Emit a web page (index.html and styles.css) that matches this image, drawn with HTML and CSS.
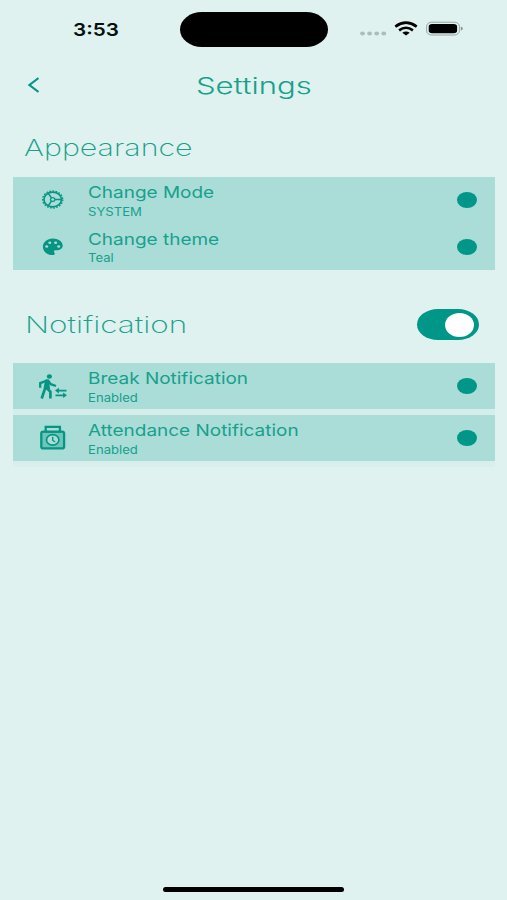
FILE: index.html
```html
<!DOCTYPE html>
<html lang="en">
<head>
<meta charset="utf-8">
<title>Settings</title>
<link rel="stylesheet" href="styles.css">
</head>
<body>
<div class="screen">
  <div class="status">
    <div class="time"><span class="wide w-time">3:53</span></div>
    <div class="island"></div>
    <svg class="status-icons" width="104" height="20" viewBox="0 0 104 20">
      <g fill="#abbdba"><ellipse cx="2.500" cy="13.500" rx="2.400" ry="2"/><ellipse cx="9.600" cy="13.500" rx="2.400" ry="2"/><ellipse cx="16.700" cy="13.500" rx="2.400" ry="2"/><ellipse cx="23.800" cy="13.500" rx="2.400" ry="2"/></g>
      <g fill="none" stroke="#000" stroke-width="2.600"><path d="M35.300 6.600Q46 -1.200 56.700 6.600"/><path d="M39.100 10.400Q46 5.100 52.900 10.400"/></g>
      <path d="M42.300 12.700Q46 10.300 49.700 12.700L46 15.600Z"/>
      <rect x="66.600" y="2.200" width="32.800" height="12.800" rx="5" ry="4.200" fill="none" stroke="#94a5a1"/>
      <rect x="68.700" y="3.900" width="28.400" height="9.400" rx="3.400" ry="2.800"/>
      <path d="M100.800 6.400Q102.900 7 102.900 8.600T100.800 10.800Z" fill="#8b9b98"/>
    </svg>
  </div>
  <header class="header">
    <svg class="back" width="14" height="18" viewBox="0 0 14 18"><path d="M13.500 2L4.400 9L13.500 16" fill="none" stroke="#009688" stroke-width="2.100"/></svg>
    <h1 class="title"><span class="wide w-settings">Settings</span></h1>
  </header>
  <section class="appearance">
    <h2 class="heading"><span class="wide w-appearance">Appearance</span></h2>
    <div class="group">
      <div class="row">
        <svg class="icon" width="30" height="28" viewBox="0 0 30 28">
          <g fill="none" stroke="#079583"><ellipse cx="14.700" cy="13.500" rx="8.800" ry="7.300" stroke-width="1.700"/><ellipse cx="14.700" cy="13.500" rx="10.100" ry="8.500" stroke-width="1.300" stroke-dasharray="1.700 1.400"/><ellipse cx="14.700" cy="13.500" rx="2.200" ry="1.900" stroke-width="1.200"/><path d="M16.900 13.500H23.200M13.500 11.900L10.200 7.300M13.500 15.100L10.200 19.700" stroke-width="1.500"/></g>
        </svg>
        <div class="label"><div class="name"><span class="wide w-name">Change Mode</span></div><div class="value"><span class="wide w-value">SYSTEM</span></div></div>
        <i class="dot"></i>
      </div>
      <div class="row">
        <svg class="icon" width="30" height="28" viewBox="0 0 30 28">
          <path fill="#079583" d="M14.700 5.500C9.200 5.500 4.900 9.200 4.900 13.800S9.200 22.100 14.700 22.100C16 22.100 16.800 21.400 16.800 20.500C16.800 19.600 15.900 19.200 15.900 18.500C15.900 17.800 16.600 17.200 17.500 17.200H19.500C22.600 17.200 24.700 15.200 24.700 12.600C24.700 8.600 20.200 5.500 14.700 5.500Z"/>
          <g fill="#aaddd8"><ellipse cx="8.700" cy="13.500" rx="1.500" ry="1.300"/><ellipse cx="11.800" cy="9.800" rx="1.500" ry="1.300"/><ellipse cx="17.600" cy="9.800" rx="1.500" ry="1.300"/><ellipse cx="20.700" cy="13.500" rx="1.500" ry="1.300"/></g>
        </svg>
        <div class="label"><div class="name"><span class="wide w-name">Change theme</span></div><div class="value"><span class="wide w-value">Teal</span></div></div>
        <i class="dot"></i>
      </div>
    </div>
  </section>
  <section class="notification">
    <div class="heading-row">
      <h2 class="heading"><span class="wide w-notification">Notification</span></h2>
      <div class="toggle"><i class="knob"></i></div>
    </div>
    <div class="group spaced">
      <div class="row">
        <svg class="icon" width="30" height="28" viewBox="0 0 30 28">
          <ellipse cx="11.400" cy="4.500" rx="2.600" ry="2.200" fill="#079583"/>
          <path fill="#079583" d="M7.500 7.500H11L12 17L8.500 17.500L6 16.500Z"/>
          <g fill="none" stroke="#079583"><path d="M8.600 8.500L6.700 17.300L3.700 26.500M9.800 9L9 16.300L12.400 19.800V26.500" stroke-width="2.700"/><path d="M9.600 8.300L2.200 11.100V15.800M10 8.500L12.800 12.200L18 14" stroke-width="2.300"/><path d="M19 18.600H28.500M17.500 23.300H26" stroke-width="1.700"/></g>
          <path fill="#079583" d="M17 18.600L20.900 15.800V21.400ZM29 23.300L25.100 20.500V26.100Z"/>
        </svg>
        <div class="label"><div class="name"><span class="wide w-name">Break Notification</span></div><div class="value"><span class="wide w-value">Enabled</span></div></div>
        <i class="dot"></i>
      </div>
      <div class="row">
        <svg class="icon" width="30" height="28" viewBox="0 0 30 28">
          <g fill="none" stroke="#079583" stroke-width="2.300"><rect x="3.300" y="7.600" width="22.800" height="16.800" rx="2" fill="#6fc5bb"/><path d="M7.700 7.600V2.800H21.900V7.600Z" fill="#aaddd8"/><ellipse cx="14.700" cy="15.900" rx="6.200" ry="5.200" fill="#aaddd8" stroke-width="1.700"/><path d="M14.700 12.700V16.200L17.100 18" stroke-width="1.400"/></g>
        </svg>
        <div class="label"><div class="name"><span class="wide w-name">Attendance Notification</span></div><div class="value"><span class="wide w-value">Enabled</span></div></div>
        <i class="dot"></i>
      </div>
    </div>
  </section>
  <div class="home"></div>
</div>
</body>
</html>
```
FILE: styles.css
```css
* { box-sizing: border-box; }
body { margin: 0; background: #dff2ef; color: #17a08c; font-family: Inter, "Liberation Sans", sans-serif; }
.screen { width: 507px; height: 900px; display: flex; flex-direction: column; overflow: hidden; }
h1, h2 { margin: 0; font-weight: 300; }
.wide { display: inline-block; white-space: nowrap; transform-origin: 0 50%; }
.w-time { transform: scaleX(1.18); }
.w-settings { transform: scaleX(1.35); }
.w-appearance { transform: scaleX(1.32); }
.w-notification { transform: scaleX(1.37); }
.w-name { transform: scaleX(1.15); }
.w-value { transform: scaleX(1.14); }
.status { height: 59px; display: flex; padding-top: 12px; }
.time { width: 180px; padding-left: 73px; color: #07100f; font-size: 17.5px; line-height: 35px; font-weight: 600; }
.island { width: 148px; height: 35px; background: #000; border-radius: 22px / 17.5px; }
.status-icons { margin: 8px 0 0 32px; }
.header { height: 52px; display: flex; align-items: center; padding-left: 25px; }
.back { margin-right: 157px; }
.title { font-size: 23px; line-height: 30px; padding-top: 1px; }
.heading { font-size: 23px; line-height: 30px; padding-left: 25px; font-weight: 200; }
.appearance { padding: 22px 12px 0 13px; }
.appearance .heading { padding-left: 11px; margin-bottom: 14px; }
.group { background: #aaddd8; border-radius: 1px; }
.row { height: 46.5px; display: flex; align-items: center; padding-right: 18px; background: #aaddd8; }
.icon { margin-left: 25px; flex: none; }
.label { margin-left: 20px; flex: 1; }
.name { font-size: 16.5px; line-height: 20px; }
.value { font-size: 11.5px; line-height: 15px; margin-top: 2.5px; margin-bottom: -1.5px; }
.dot { width: 20px; height: 16px; border-radius: 50%; background: #009688; }
.notification { padding: 39px 12px 0 13px; }
.heading-row { height: 31px; display: flex; align-items: center; padding-right: 16px; margin-bottom: 23px; }
.heading-row .heading { padding-left: 12px; flex: 1; }
.toggle { width: 62px; height: 31px; border-radius: 21px / 15.5px; background: #009688; display: flex; align-items: center; justify-content: flex-end; padding-right: 5px; }
.knob { width: 29px; height: 24px; border-radius: 50%; background: #fff; }
.spaced { display: grid; gap: 6px; padding-bottom: 6px; background: linear-gradient(#d6eeeb 90%, #d9f0ed); }
.spaced .row { height: 46px; }
.home { width: 181px; height: 5px; margin: auto 0 8px 163px; border-radius: 3px; background: #000; }
```
